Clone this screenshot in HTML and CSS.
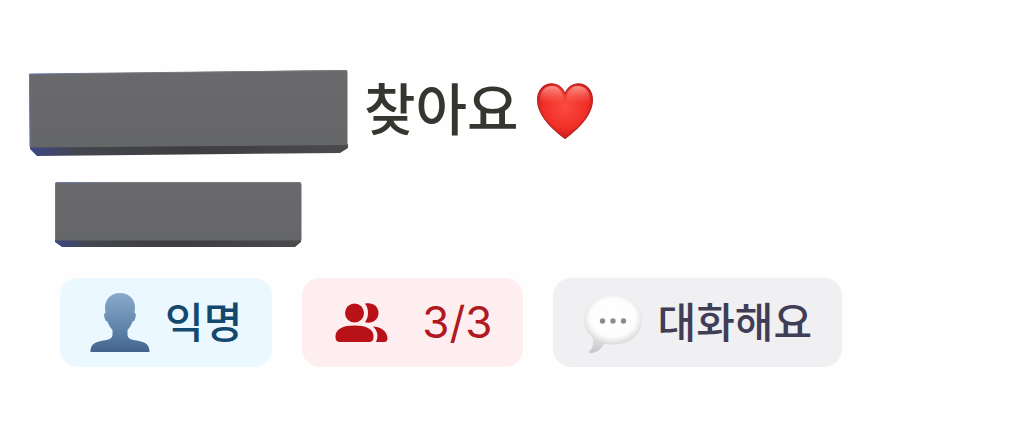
FILE: index.html
```
<!DOCTYPE html>
<html lang="ko">
<head>
    <meta charset="UTF-8">
    <meta name="viewport" content="width=device-width, initial-scale=1.0">
    <title>찾아요</title>
    <link rel="stylesheet" href="styles.css">
</head>
<body>
    <main class="post">
        <div class="post-title">
            <svg class="title-block" viewBox="0 0 320 88" aria-hidden="true">
                <defs>
                    <linearGradient id="blockFace" x1="0" y1="0" x2="0" y2="1">
                        <stop offset="0" stop-color="#6a6a6c"/>
                        <stop offset="1" stop-color="#656668"/>
                    </linearGradient>
                    <linearGradient id="blockEdge" x1="0" y1="0" x2="1" y2="0">
                        <stop offset="0" stop-color="#3c4684"/>
                        <stop offset="0.14" stop-color="#44464e"/>
                        <stop offset="0.5" stop-color="#3e3e40"/>
                        <stop offset="1" stop-color="#4b4b4d"/>
                    </linearGradient>
                    <linearGradient id="blockRim" x1="0" y1="0" x2="1" y2="0">
                        <stop offset="0" stop-color="#6675b5"/>
                        <stop offset="0.25" stop-color="#77787c"/>
                    </linearGradient>
                </defs>
                <path fill="url(#blockEdge)" d="M2 77 L320 74 V78 L312 83 L9 86 L2 79Z"/>
                <path fill="url(#blockFace)" d="M2 4 L318 0 Q319.500 0 319.500 2 V75 L2 77.500 L1 5 Q1 4 2 4Z"/>
                <path fill="none" stroke="url(#blockRim)" d="M2 77 L1.500 4 L318 0.500"/>
            </svg>
            <h1 class="title-text">찾아요</h1>
            <svg class="heart" viewBox="0 0 56 56" role="img" aria-label="하트">
                <defs>
                    <radialGradient id="heartFill" cx="0.5" cy="0.42" r="0.6">
                        <stop offset="0" stop-color="#fb4a40"/>
                        <stop offset="0.65" stop-color="#f03029"/>
                        <stop offset="1" stop-color="#c9141a"/>
                    </radialGradient>
                    <linearGradient id="heartShine" x1="0" y1="0" x2="0" y2="1">
                        <stop offset="0" stop-color="#ffb0a5" stop-opacity="0.8"/>
                        <stop offset="0.9" stop-color="#ff7a6d" stop-opacity="0"/>
                    </linearGradient>
                </defs>
                <path fill="url(#heartFill)" stroke="#b92422" stroke-width="1.2" d="M28 10.500 C25 4 20 0.800 15 0.800 C6 0.800 0.600 8 0.600 17 C0.600 32 14 45 28 55.400 C42 45 55.400 32 55.400 17 C55.400 8 50 0.800 41 0.800 C36 0.800 31 4 28 10.500Z"/>
                <path fill="url(#heartShine)" d="M3 17 C3 8 8 3 15 3 C20 3 24 6 26.500 13 V22 H3Z"/>
                <path fill="url(#heartShine)" d="M53 17 C53 8 48 3 41 3 C36 3 32 6 29.500 13 V22 H53Z"/>
            </svg>
        </div>

        <svg class="name-block" viewBox="0 0 248 65" aria-hidden="true">
            <path fill="url(#blockEdge)" d="M1 58 H247 V60 L241 65 H8 L1 60Z"/>
            <path fill="url(#blockFace)" d="M2 0 H246 L247.500 2 V58.500 H1 V2Z"/>
            <path fill="none" stroke="url(#blockRim)" d="M1.500 58 V1.500 L2 0.500 H246 L247 2"/>
        </svg>

        <div class="tags">
            <div class="tag tag-anonymous">
                <svg class="tag-icon" viewBox="0 0 60 60" aria-hidden="true">
                    <defs>
                        <linearGradient id="personFill" x1="0" y1="0" x2="0" y2="1">
                            <stop offset="0" stop-color="#88a9ca"/>
                            <stop offset="0.5" stop-color="#678bb0"/>
                            <stop offset="1" stop-color="#42638e"/>
                        </linearGradient>
                    </defs>
                    <path fill="url(#personFill)" d="M30 0 C20 0 15 7 15 15 L15.500 20 C13.500 20 14 23 15 26 C15.500 28 16.500 28.500 17.500 28.500 C18.500 32 20.500 35 22.500 37 V42 C22.500 46 17 47 11 48 C3 49.500 0.500 53 0.500 59 H59.500 C59.500 53 57 49.500 49 48 C43 47 37.500 46 37.500 42 V37 C39.500 35 41.500 32 42.500 28.500 C43.500 28.500 44.500 28 45 26 C46 23 46.500 20 44.500 20 L45 15 C45 7 40 0 30 0Z"/>
                </svg>
                <span>익명</span>
            </div>
            <div class="tag tag-members">
                <svg class="tag-icon" viewBox="0 0 60 60" aria-hidden="true">
                    <g fill="#b81218">
                        <circle cx="22.500" cy="20" r="9.500"/>
                        <path d="M33 10.800 C40 9 46.500 13 46.500 20 C46.500 27 40 31 33 29.200 C37 24 37 16 33 10.800Z"/>
                        <path d="M3.500 43 C3.500 35.500 12 32.500 22.500 32.500 C33 32.500 41.500 35.500 41.500 43 V44.500 C41.500 47.500 39.500 49 37 49 H8 C5.500 49 3.500 47.500 3.500 44.500Z"/>
                        <path d="M41 33.500 C49 33.500 55.500 38.500 55.500 45.500 C55.500 48 54 49 52 49 H44 C46.500 43.500 46 38 41 33.500Z"/>
                    </g>
                </svg>
                <span>3/3</span>
            </div>
            <div class="tag tag-chat">
                <svg class="tag-icon" viewBox="0 0 60 60" aria-hidden="true">
                    <defs>
                        <radialGradient id="bubbleFill" cx="0.5" cy="0.45" r="0.56">
                            <stop offset="0" stop-color="#ffffff"/>
                            <stop offset="0.7" stop-color="#fdfdfd"/>
                            <stop offset="1" stop-color="#d8d8da"/>
                        </radialGradient>
                        <linearGradient id="bubbleTail" x1="0" y1="0" x2="0" y2="1">
                            <stop offset="0" stop-color="#e6e6e8"/>
                            <stop offset="1" stop-color="#c6c6c8"/>
                        </linearGradient>
                    </defs>
                    <path fill="url(#bubbleTail)" d="M9 42 C11 50 10 55 6.500 58 C5.500 59 6 60 8 60 C14 60 19 56 22 49Z"/>
                    <path fill="url(#bubbleFill)" d="M30 2.500 C47 2.500 59 13 59 27 C59 41 47 51.500 30 51.500 C27 51.500 24 51 21 50.500 C9 47 1 39 1 27 C1 13 13 2.500 30 2.500Z"/>
                    <g fill="#8b8b8d">
                        <circle cx="19.500" cy="28" r="2.700"/>
                        <circle cx="30" cy="28" r="2.700"/>
                        <circle cx="40.500" cy="28" r="2.700"/>
                    </g>
                </svg>
                <span>대화해요</span>
            </div>
        </div>
    </main>
</body>
</html>
```
FILE: styles.css
```
body {
    margin: 0;
    background-color: #fefefe;
    font-family: Inter, "Noto Sans CJK KR", sans-serif;
}

.post {
    display: flex;
    flex-direction: column;
    align-items: flex-start;
    padding: 70px 28px;
}

.post-title {
    display: flex;
    align-items: flex-start;
}

.title-block {
    width: 320px;
    height: 88px;
}

.title-text {
    margin: 0 18px 0 16px;
    font-size: 56px;
    font-weight: 500;
    line-height: 80px;
    color: #373530;
}

.heart {
    width: 56px;
    height: 56px;
    margin-top: 13px;
}

.name-block {
    width: 248px;
    height: 65px;
    margin: 24px 26px 0;
}

.tags {
    display: flex;
    flex-wrap: wrap;
    gap: 30px;
    margin: 31px 32px 0;
}

.tag {
    display: flex;
    align-items: center;
    gap: 15px;
    padding: 14px 30px;
    border-radius: 18px;
    font-size: 42px;
    font-weight: 500;
    line-height: 61px;
    white-space: nowrap;
}

.tag-icon {
    width: 60px;
    height: 60px;
}

.tag-anonymous {
    background-color: #ecf8ff;
    color: #14496e;
}

.tag-members {
    gap: 30px;
    background-color: #ffeef0;
    color: #b0191f;
    font-size: 44px;
    font-weight: 400;
}

.tag-chat {
    background-color: #f0f0f2;
    color: #403d56;
}
```
